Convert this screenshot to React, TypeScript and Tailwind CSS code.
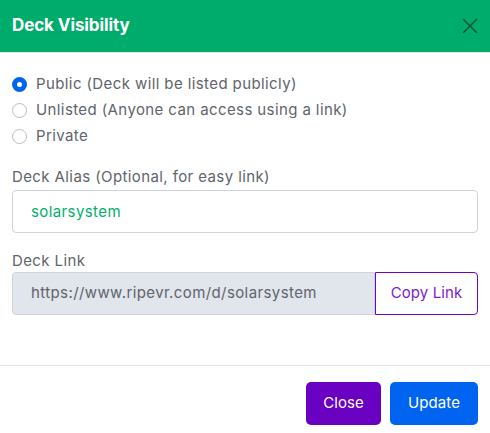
import { useState } from "react";

const OPTIONS = [
  { value: "public", label: "Public (Deck will be listed publicly)" },
  { value: "unlisted", label: "Unlisted (Anyone can access using a link)" },
  { value: "private", label: "Private" },
];

export default function App() {
  const [visibility, setVisibility] = useState("public");
  const [alias, setAlias] = useState("solarsystem");

  return (
    <div className="w-[490px] h-[433px] bg-white flex flex-col font-['Inter',sans-serif] text-[#60646b] tracking-[0.4px]">
      {/* header */}
      <div className="h-[53px] shrink-0 bg-[#00ac6b] flex items-center justify-between pl-3 pr-3 border-b border-[#e3e6ea]">
        <div className="text-white text-[17px] font-bold tracking-[-0.1px]">Deck Visibility</div>
        <button className="w-4 h-4 flex items-center justify-center">
          <svg width="16" height="16" viewBox="0 0 16 16" fill="none" stroke="#0b5c36" strokeWidth="1.6">
            <path d="M1 1 L15 15 M15 1 L1 15" />
          </svg>
        </button>
      </div>

      {/* body */}
      <div className="flex-1 px-3 pt-[21px]">
        <div className="flex flex-col gap-[5px]">
          {OPTIONS.map((o) => {
            const on = visibility === o.value;
            return (
              <label key={o.value} className="flex items-center gap-[9px] h-[21px] cursor-pointer" onClick={() => setVisibility(o.value)}>
                <span
                  className={`w-[15px] h-[15px] rounded-full shrink-0 ${
                    on ? "border-[5px] border-[#0064f0] bg-white" : "border border-[#b9bdc3] bg-white"
                  }`}
                />
                <span className="text-[15px]">{o.label}</span>
              </label>
            );
          })}
        </div>

        <div className="mt-[21px] text-[15px] leading-[18px]">Deck Alias (Optional, for easy link)</div>
        <input
          value={alias}
          onChange={(e) => setAlias(e.target.value)}
          className="mt-[4px] w-full h-[43px] rounded-[4px] border border-[#ced2da] px-[18px] text-[15px] text-[#00b06c] outline-none tracking-[0.4px]"
        />

        <div className="mt-[19px] text-[15px] leading-[18px]">Deck Link</div>
        <div className="mt-[2px] flex h-[43px]">
          <div className="flex-1 bg-[#e1e5ec] border border-[#ced2da] rounded-l-[4px] flex items-center px-[18px] text-[15px]">
            https://www.ripevr.com/d/solarsystem
          </div>
          <button className="w-[103px] border border-[#7000cc] rounded-r-[4px] text-[15px] text-[#7a1cd0] tracking-[0.1px]">Copy Link</button>
        </div>
      </div>

      {/* footer */}
      <div className="h-[68px] shrink-0 border-t border-[#e3e4ea] flex items-start justify-end gap-[9px] pr-3 pt-4">
        <button className="w-[75px] h-[43px] rounded-[5px] bg-[#6a00c1] text-white text-[15px] tracking-[0.1px]">Close</button>
        <button className="w-[88px] h-[43px] rounded-[5px] bg-[#0064f0] text-white text-[15px] tracking-[0.1px]">Update</button>
      </div>
    </div>
  );
}
